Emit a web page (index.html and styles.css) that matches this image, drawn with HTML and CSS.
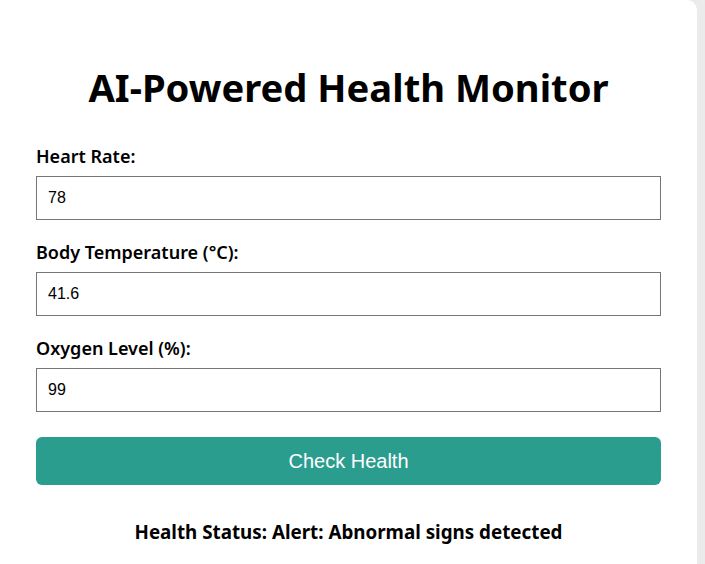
FILE: index.html
```html
<!DOCTYPE html>
<html lang="en">
<head>
<meta charset="utf-8">
<title>AI-Powered Health Monitor</title>
<link rel="stylesheet" href="styles.css">
</head>
<body>
<div class="card">
  <h1 class="title">AI-Powered Health Monitor</h1>
  <form class="form">
    <div class="field">
      <label class="label" for="hr">Heart Rate:</label>
      <input class="input" id="hr" type="text" value="78">
    </div>
    <div class="field">
      <label class="label" for="temp">Body Temperature (°C):</label>
      <input class="input" id="temp" type="text" value="41.6">
    </div>
    <div class="field">
      <label class="label" for="ox">Oxygen Level (%):</label>
      <input class="input" id="ox" type="text" value="99">
    </div>
    <button class="button" type="button">Check Health</button>
  </form>
  <p class="status">Health Status: Alert: Abnormal signs detected</p>
</div>
</body>
</html>
```
FILE: styles.css
```css
html, body {
  margin: 0;
  padding: 0;
  height: 100%;
}
body {
  background: #ebebeb;
  font-family: "Noto Sans", "Open Sans", sans-serif;
  color: #000;
}
.card {
  box-sizing: border-box;
  width: 697px;
  min-height: 100%;
  background: #fff;
  border-radius: 0 10px 0 0;
  padding: 61px 36px 20px;
}
.title {
  margin: 0 0 31px;
  font-size: 38.2px;
  line-height: 52px;
  font-weight: 700;
  text-align: center;
}
.form {
  display: flex;
  flex-direction: column;
}
.field {
  display: flex;
  flex-direction: column;
  margin-bottom: 20px;
}
.label {
  font-size: 18px;
  line-height: 24px;
  font-weight: 600;
  margin-bottom: 8px;
}
.input {
  box-sizing: border-box;
  height: 44px;
  width: 100%;
  border: 1px solid #767676;
  border-radius: 0;
  padding: 0 11px;
  font-family: "Liberation Sans", Arial, sans-serif;
  font-size: 16px;
  color: #000;
  background: #fff;
}
.button {
  margin-top: 5px;
  height: 48px;
  width: 100%;
  border: none;
  border-radius: 6px;
  background: #2a9d8f;
  color: #fff;
  font-family: "Liberation Sans", Arial, sans-serif;
  font-size: 20px;
}
.status {
  margin: 35px 0 0;
  text-align: center;
  font-size: 18.8px;
  line-height: 24px;
  font-weight: 700;
}
```
